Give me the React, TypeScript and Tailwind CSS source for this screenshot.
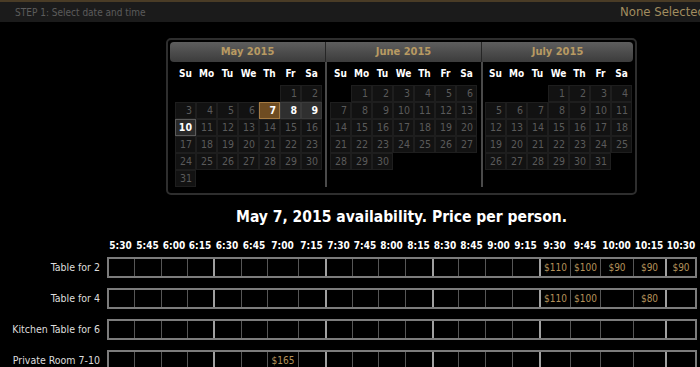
import React from 'react';

const FONT = "font-['DejaVu_Sans_Condensed','Noto_Sans',sans-serif]";

type Month = { name: string; offset: number; days: number; width: string; body: string; header: string };

const months: Month[] = [
  { name: 'May 2015', offset: 5, days: 31, width: 'w-[155px]', body: 'pl-[5px]', header: 'rounded-l-[4px]' },
  { name: 'June 2015', offset: 1, days: 30, width: 'w-[156px]', body: 'border-l-2 border-[#4a4a4a] pl-[3px]', header: 'border-l border-[#262626]' },
  { name: 'July 2015', offset: 3, days: 31, width: 'w-[152px]', body: 'border-l-2 border-[#4a4a4a] pl-[2px]', header: 'border-l border-[#262626] rounded-r-[4px]' },
];

const dayNames = ['Su', 'Mo', 'Tu', 'We', 'Th', 'Fr', 'Sa'];

// columns of the availability grid, widths follow the auto table in the screenshot
const slots = [
  { t: '5:30', w: 'w-[27px]' },
  { t: '5:45', w: 'w-[27px]' },
  { t: '6:00', w: 'w-[26px]' },
  { t: '6:15', w: 'w-[26px]' },
  { t: '6:30', w: 'w-[28px]' },
  { t: '6:45', w: 'w-[26px]' },
  { t: '7:00', w: 'w-[31px]' },
  { t: '7:15', w: 'w-[27px]' },
  { t: '7:30', w: 'w-[27px]' },
  { t: '7:45', w: 'w-[26px]' },
  { t: '8:00', w: 'w-[27px]' },
  { t: '8:15', w: 'w-[27px]' },
  { t: '8:30', w: 'w-[26px]' },
  { t: '8:45', w: 'w-[27px]' },
  { t: '9:00', w: 'w-[27px]' },
  { t: '9:15', w: 'w-[27px]' },
  { t: '9:30', w: 'w-[31px]' },
  { t: '9:45', w: 'w-[30px]' },
  { t: '10:00', w: 'w-[33px]' },
  { t: '10:15', w: 'w-[32px]' },
  { t: '10:30', w: 'w-[32px]' },
];

const rows: { label: string; prices: Record<string, string> }[] = [
  { label: 'Table for 2', prices: { '9:30': '$110', '9:45': '$100', '10:00': '$90', '10:15': '$90', '10:30': '$90' } },
  { label: 'Table for 4', prices: { '9:30': '$110', '9:45': '$100', '10:15': '$80' } },
  { label: 'Kitchen Table for 6', prices: {} },
  { label: 'Private Room 7-10', prices: { '7:00': '$165' } },
];

const dayStyle = (month: string, d: number) => {
  if (month === 'May 2015') {
    if (d === 7) return 'bg-[#6e4c22] border-[#a47a42] text-white font-bold';
    if (d === 8 || d === 9) return 'bg-[#2f2f2f] border-[#3a3a3a] text-white font-bold';
    if (d === 10) return 'bg-[#2a2a2a] border-[#5a5a5a] text-white font-bold';
  }
  return 'bg-[#121212] border-[#1e1e1e] text-[#5a5a5a]';
};

const MonthPanel = ({ m }: { m: Month }) => {
  const cells: (number | null)[] = [];
  for (let i = 0; i < m.offset; i++) cells.push(null);
  for (let d = 1; d <= m.days; d++) cells.push(d);

  return (
    <div className={`${m.width} flex flex-col`}>
      <div className={`h-[20px] bg-gradient-to-b from-[#5e5e5e] to-[#3c3c3c] flex items-center justify-center text-[11px] font-bold text-[#b89a62] ${m.header}`}>
        {m.name}
      </div>
      <div className={`flex-1 mb-[4px] ${m.body}`}>
        <div className="flex h-[23px] items-center">
          {dayNames.map((n) => (
            <div key={n} className="w-[21px] text-center text-[10px] font-bold text-white">
              {n}
            </div>
          ))}
        </div>
        <div className="grid grid-cols-[repeat(7,21px)] auto-rows-[17px]">
          {cells.map((d, i) =>
            d === null ? (
              <div key={`e${i}`} />
            ) : (
              <div
                key={d}
                className={`border flex items-center justify-end pr-[3px] text-[10.5px] ${dayStyle(m.name, d)}`}
              >
                {d}
              </div>
            )
          )}
        </div>
      </div>
    </div>
  );
};

export default function App() {
  return (
    <div className={`w-[700px] h-[367px] overflow-hidden bg-black ${FONT}`}>
      {/* step bar */}
      <div className="h-[22px] border-t-2 border-[#4a3c26] bg-[#1b1b1b] flex items-center">
        <div className="w-[620px] shrink-0 pl-[15px] text-[10px] text-[#5c5c5c] whitespace-nowrap">STEP 1: Select date and time</div>
        <div className="shrink-0 text-[13px] text-[#a28d5f] whitespace-nowrap">None Selected</div>
      </div>

      {/* calendar */}
      <div className="ml-[166px] mt-[16px] w-[471px] border-2 border-[#2e2e2e] rounded-[5px] p-[2px] flex">
        {months.map((m) => (
          <MonthPanel key={m.name} m={m} />
        ))}
      </div>

      <div className="ml-[166px] w-[471px] mt-[13px] h-[18px] leading-[18px] text-center text-[15.5px] font-bold text-white whitespace-nowrap">
        May 7, 2015 availability. Price per person.
      </div>

      {/* availability grid */}
      <div className="mt-[13px] flex h-[14px] leading-[14px]">
        <div className="w-[107px] shrink-0" />
        {slots.map((s) => (
          <div key={s.t} className={`${s.w} shrink-0 text-center text-[10px] font-bold text-white whitespace-nowrap`}>
            {s.t}
          </div>
        ))}
      </div>

      <div className="mt-[4px] flex flex-col gap-[10px]">
        {rows.map((r) => (
          <div key={r.label} className="flex h-[21px]">
            <div className="w-[107px] shrink-0 pr-[7px] text-right text-[10.5px] text-[#dddddd] leading-[21px] whitespace-nowrap">
              {r.label}
            </div>
            <div className="flex border-y-2 border-[#7c7c7c]">
              {slots.map((s, i) => {
                const edge =
                  i === 0
                    ? 'border-l-2 border-[#7c7c7c]'
                    : i % 4 === 0
                    ? 'border-l-2 border-[#a0a0a0]'
                    : 'border-l border-[#565656]';
                const last = i === slots.length - 1 ? 'border-r-2 border-r-[#7c7c7c]' : '';
                return (
                  <div key={s.t} className={`${s.w} ${edge} ${last} shrink-0 flex items-center justify-center text-[10px] text-[#b3915a]`}>
                    {r.prices[s.t] ?? ''}
                  </div>
                );
              })}
            </div>
          </div>
        ))}
      </div>
    </div>
  );
}
